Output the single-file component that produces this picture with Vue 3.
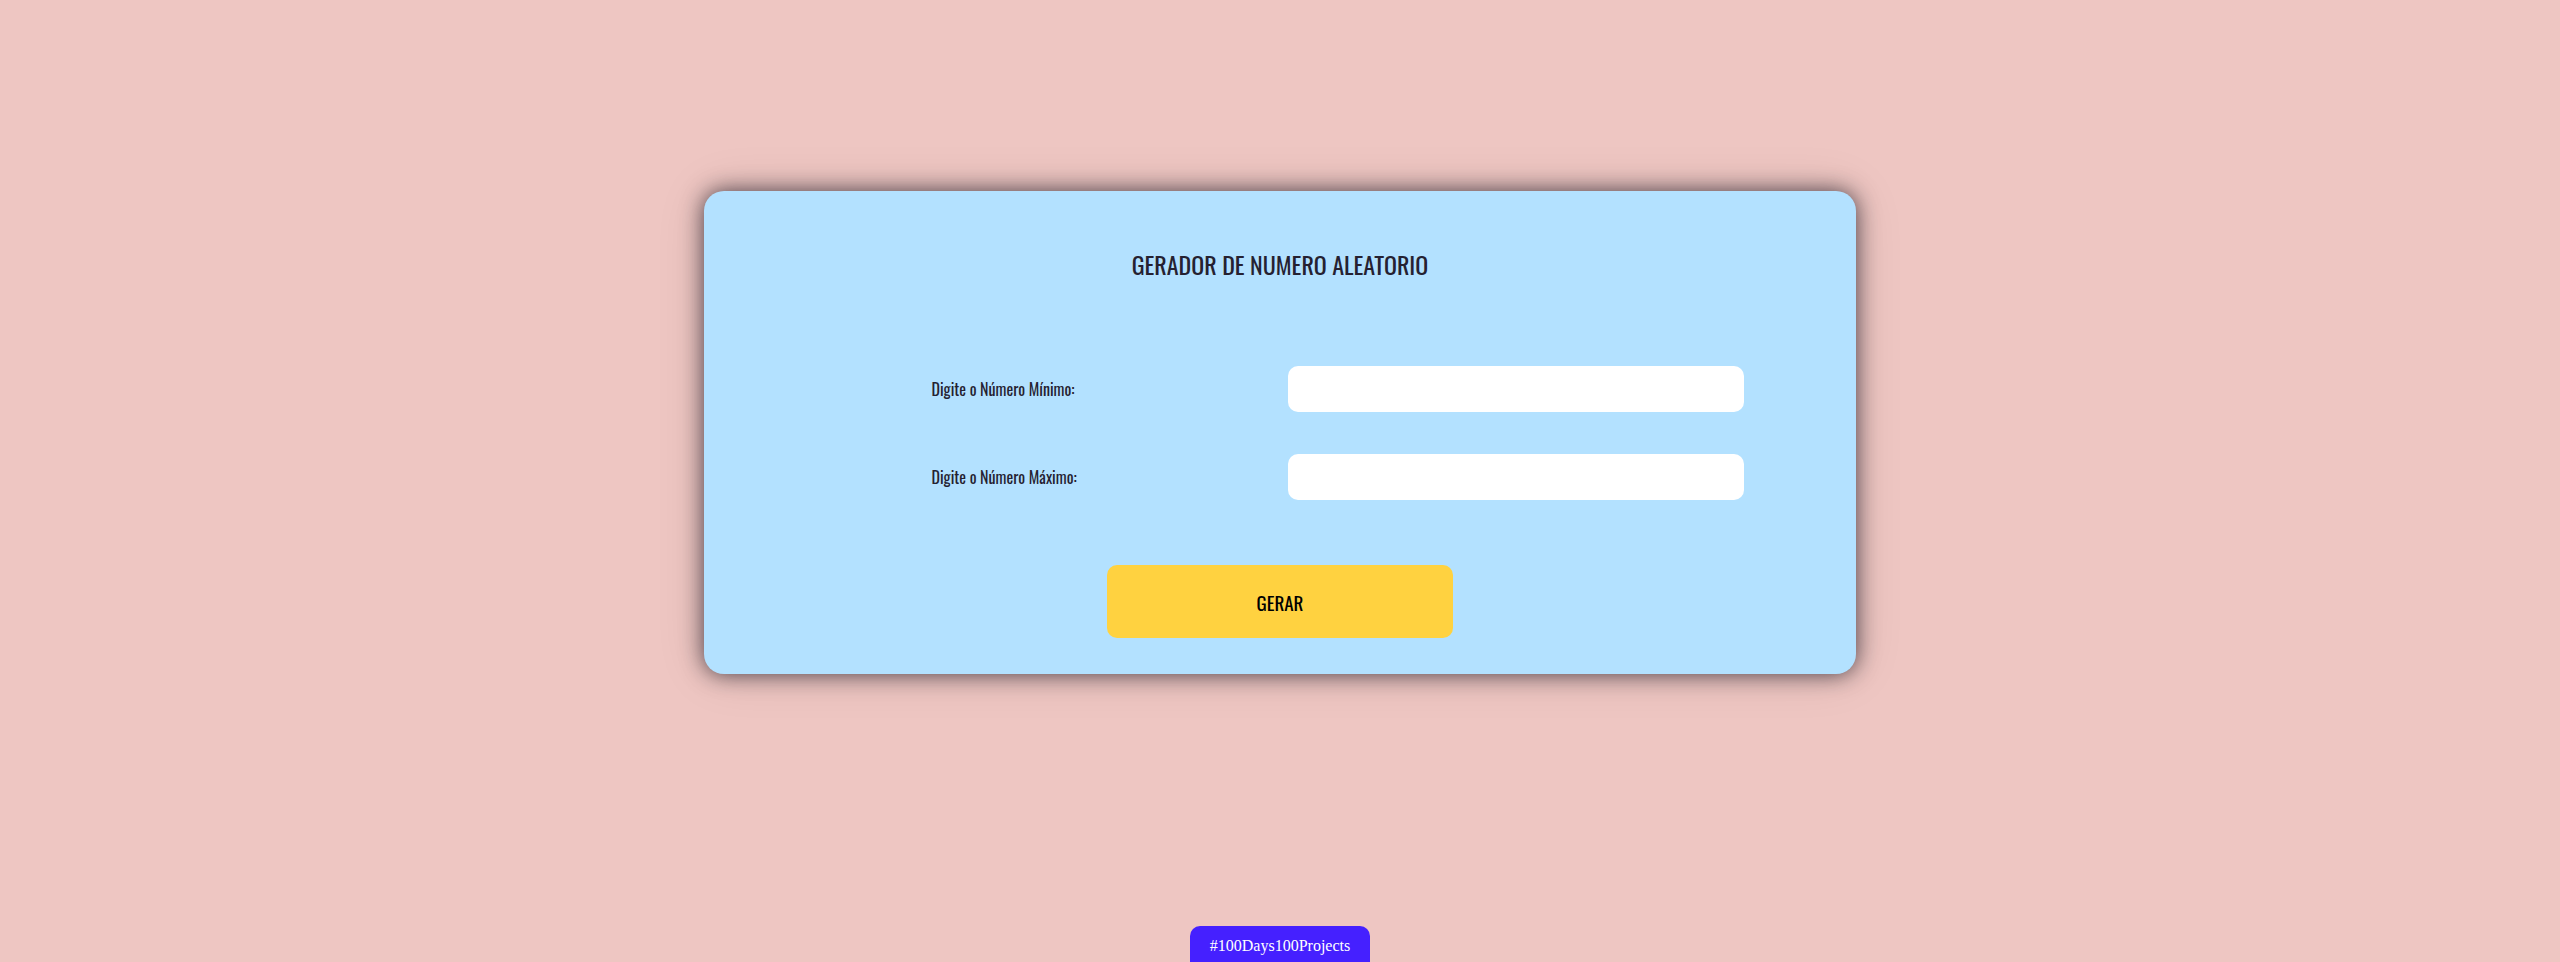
<script setup>
import { ref } from 'vue'

const min = ref('')
const max = ref('')
const result = ref(null)

function generate() {
  const low = Math.ceil(Number(min.value))
  const high = Math.floor(Number(max.value))
  if (min.value === '' || max.value === '' || high < low) return
  result.value = Math.floor(Math.random() * (high - low + 1)) + low
}
</script>

<template>
  <div class="page">
    <main class="card">
      <h1 class="title">GERADOR DE NUMERO ALEATORIO</h1>
      <form class="form" @submit.prevent="generate">
        <div class="field">
          <label for="min">Digite o Número Mínimo:</label>
          <input id="min" v-model="min" type="number" />
        </div>
        <div class="field">
          <label for="max">Digite o Número Máximo:</label>
          <input id="max" v-model="max" type="number" />
        </div>
        <button class="generate" type="submit">GERAR</button>
        <output v-if="result !== null" class="result">{{ result }}</output>
      </form>
    </main>
    <footer class="footer">
      <a class="tag" href="#">#100Days100Projects</a>
    </footer>
  </div>
</template>

<style>
body {
  background: #eec6c2;
}
</style>

<style scoped>
.page {
  box-sizing: border-box;
  min-height: 100vh;
  display: grid;
  grid-template-rows: 1fr auto;
  justify-items: center;
  color: #252131;
  font-family: Oswald, "Liberation Sans Narrow", "Liberation Sans", sans-serif;
}

.card {
  box-sizing: border-box;
  align-self: center;
  width: 45%;
  margin-top: 36px;
  margin-bottom: 97px;
  padding: 55px 0 36px;
  border-radius: 20px;
  background: #b3e1ff;
  box-shadow: 0 0 22px rgba(20, 16, 28, 0.72), 0 0 50px rgba(20, 16, 28, 0.12);
}

.title {
  margin: 0;
  text-align: center;
  font-size: 24px;
  font-weight: 400;
  line-height: 36px;
}

.form {
  display: flex;
  flex-direction: column;
  gap: 42px;
  padding-top: 84px;
}

.field {
  display: grid;
  grid-template-columns: 356fr 456fr;
  align-items: center;
  margin: 0 9.7% 0 19.75%;
  font-size: 16px;
  line-height: 24px;
}

.field input {
  box-sizing: border-box;
  width: 100%;
  height: 46px;
  padding: 10px;
  border: 0;
  border-radius: 10px;
  background: #fff;
  color: inherit;
  font: inherit;
  appearance: textfield;
}

.generate {
  align-self: center;
  width: 30%;
  height: 73px;
  margin-top: 23px;
  border: 0;
  border-radius: 10px;
  background: #ffd240;
  color: #000;
  font-family: inherit;
  font-size: 19px;
  cursor: pointer;
}

.result {
  text-align: center;
  font-size: 24px;
}

.tag {
  display: block;
  padding: 11px 20px 7px;
  border-radius: 10px 10px 0 0;
  background: #4520ff;
  color: #fff;
  font-family: "Liberation Serif", serif;
  font-size: 16px;
  line-height: 18px;
  text-decoration: none;
}
</style>
